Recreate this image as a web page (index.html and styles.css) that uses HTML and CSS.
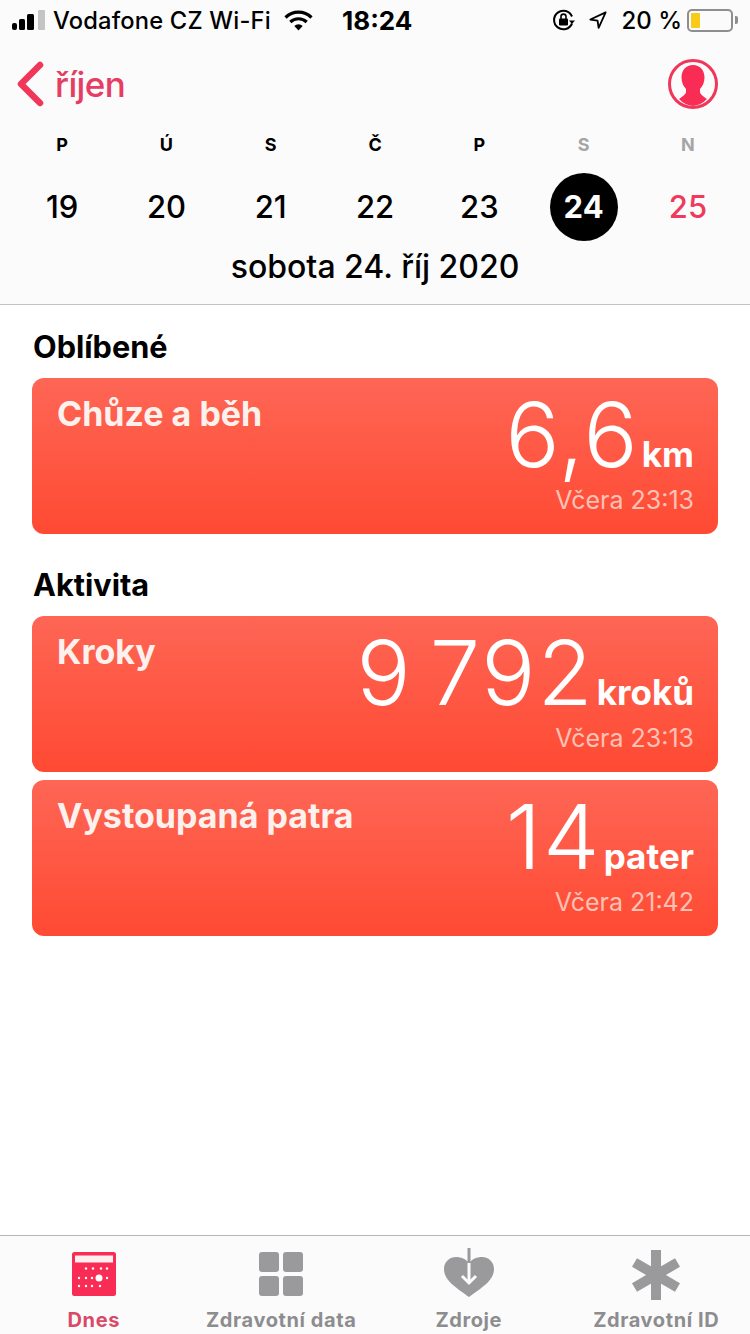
FILE: index.html
```html
<!DOCTYPE html>
<html lang="cs">
<head>
<meta charset="utf-8">
<title>Zdraví</title>
<link rel="stylesheet" href="styles.css">
</head>
<body>
<div class="app">
  <header class="top">
    <div class="status">
      <div class="status-left">
        <svg class="signal" width="33" height="20" viewBox="0 0 33 20"><rect x="0" y="13" width="5" height="7" rx="2" fill="#000"/><rect x="7" y="9" width="6" height="11" rx="1.5" fill="#000"/><rect x="15" y="4" width="7" height="16" rx="1.5" fill="#000"/><rect x="26" y="0" width="7" height="20" rx="1" fill="#c4c4c6"/></svg>
        <span class="carrier">Vodafone CZ Wi-Fi</span>
        <svg class="wifi" width="29" height="21" viewBox="0 0 29 21"><path d="M1.5 7.5a18.5 18.5 0 0 1 26 0" fill="none" stroke="#000" stroke-width="3.2"/><path d="M6.3 12a12 12 0 0 1 16.4 0" fill="none" stroke="#000" stroke-width="3.2"/><path d="M14.5 20.5l-4.2-4.6a6 6 0 0 1 8.4 0z" fill="#000"/></svg>
      </div>
      <span class="clock">18:24</span>
      <div class="status-right">
        <svg class="lock" width="24" height="22" viewBox="0 0 24 22"><path d="M20 14.5A9.3 9.3 0 1 1 20 7.5" fill="none" stroke="#000" stroke-width="2"/><path d="M17 11.5h6l-3 3.6z" fill="#000"/><rect x="7" y="9.5" width="9" height="7" rx="1" fill="#000"/><path d="M9 10V7.6a2.5 2.5 0 0 1 5 0V10" fill="none" stroke="#000" stroke-width="1.6"/></svg>
        <svg class="arrow" width="18" height="20" viewBox="0 0 20 20"><path d="M18.5 1.5L1.5 9.5l8 1.2 1.2 8z" fill="none" stroke="#000" stroke-width="2" stroke-linejoin="round"/></svg>
        <span class="percent">20 %</span>
        <div class="battery"><div class="battery-body"><div class="battery-fill"></div></div><div class="battery-tip"></div></div>
      </div>
    </div>
    <div class="nav">
      <div class="back">
        <svg width="29" height="46" viewBox="0 0 29 46"><path d="M25 4L6 23l19 19" fill="none" stroke="#f0375a" stroke-width="6.5" stroke-linecap="round" stroke-linejoin="round"/></svg>
        <span class="back-label">říjen</span>
      </div>
      <svg class="profile" width="50" height="50" viewBox="0 0 50 50"><circle cx="25" cy="25" r="23.5" fill="#fbfbfc" stroke="#f0375a" stroke-width="3"/><path d="M25 6c7 0 11.500 5 11.500 12.500 0 5-2 9-4.500 11.500v3c0 2 3 4 7 7A22 22 0 0 1 25 47a22 22 0 0 1-14-7c4-3 7-5 7-7v-3c-2.500-2.500-4.500-6.500-4.500-11.500C13.500 11 18 6 25 6z" fill="#f82c55"/></svg>
    </div>
    <div class="week">
      <div class="day"><span class="dow">P</span><span class="num">19</span></div>
      <div class="day"><span class="dow">Ú</span><span class="num">20</span></div>
      <div class="day"><span class="dow">S</span><span class="num">21</span></div>
      <div class="day"><span class="dow">Č</span><span class="num">22</span></div>
      <div class="day"><span class="dow">P</span><span class="num">23</span></div>
      <div class="day"><span class="dow muted">S</span><span class="num today">24</span></div>
      <div class="day"><span class="dow muted">N</span><span class="num sunday">25</span></div>
    </div>
    <div class="date">sobota 24. říj 2020</div>
  </header>

  <main class="content">
    <h2 class="section">Oblíbené</h2>
    <article class="card">
      <div class="card-title">Chůze a běh</div>
      <div class="card-data">
        <div class="value"><span class="big">6,6</span><span class="unit">km</span></div>
        <div class="when">Včera 23:13</div>
      </div>
    </article>
    <h2 class="section second">Aktivita</h2>
    <article class="card">
      <div class="card-title">Kroky</div>
      <div class="card-data">
        <div class="value"><span class="big">9 792</span><span class="unit">kroků</span></div>
        <div class="when">Včera 23:13</div>
      </div>
    </article>
    <article class="card next">
      <div class="card-title">Vystoupaná patra</div>
      <div class="card-data">
        <div class="value"><span class="big">14</span><span class="unit">pater</span></div>
        <div class="when">Včera 21:42</div>
      </div>
    </article>
  </main>

  <nav class="tabs">
    <div class="tab active">
      <svg width="46" height="46" viewBox="0 0 46 46"><rect x="1" y="1" width="44" height="44" rx="2.500" fill="#f82c55"/><rect x="4" y="4.500" width="38" height="7" fill="#fdeef1"/><g fill="#fff"><circle cx="15" cy="17.500" r="1.200"/><circle cx="22" cy="17.500" r="1.200"/><circle cx="30" cy="17.500" r="1.200"/><circle cx="36" cy="17.500" r="1.200"/><circle cx="8" cy="27" r="1.200"/><circle cx="15" cy="27" r="1.200"/><circle cx="21" cy="27" r="1.200"/><circle cx="28" cy="27" r="3.500"/><circle cx="36" cy="27" r="1.200"/><circle cx="8" cy="35" r="1.200"/><circle cx="15" cy="35" r="1.200"/><circle cx="21" cy="35" r="1.200"/><circle cx="29" cy="35" r="1.200"/></g></svg>
      <span>Dnes</span>
    </div>
    <div class="tab">
      <svg width="46" height="46" viewBox="0 0 46 46"><g fill="#9a9a9c"><rect x="1" y="1" width="20" height="20" rx="3"/><rect x="25" y="1" width="20" height="20" rx="3"/><rect x="1" y="25" width="20" height="20" rx="3"/><rect x="25" y="25" width="20" height="20" rx="3"/></g></svg>
      <span>Zdravotní data</span>
    </div>
    <div class="tab">
      <svg width="52" height="52" viewBox="0 0 52 52" class="tab-heart"><path d="M26 50C14 41 1 34 1 22 1 14.500 7 10 13 10c5 0 10 2 13 6 3-4 8-6 13-6 6 0 12 4.500 12 12 0 12-13 19-25 28z" fill="#9a9a9c"/><path d="M26 1v31" stroke="#9a9a9c" stroke-width="3" fill="none"/><path d="M26 16v20" stroke="#fbfbfc" stroke-width="3" fill="none"/><path d="M19 29l7 7 7-7" stroke="#fbfbfc" stroke-width="3" fill="none"/></svg>
      <span>Zdroje</span>
    </div>
    <div class="tab">
      <svg width="48" height="50" viewBox="0 0 48 50" class="tab-star"><g stroke="#9a9a9c" stroke-width="10"><path d="M24 0v50"/><path d="M2.500 12.500l43 25"/><path d="M45.500 12.500l-43 25"/></g></svg>
      <span>Zdravotní ID</span>
    </div>
  </nav>
</div>
</body>
</html>
```
FILE: styles.css
```css
* { box-sizing: border-box; margin: 0; padding: 0; }
html, body { width: 750px; height: 1334px; overflow: hidden; background: #fff; }
body { font-family: Inter, "Liberation Sans", sans-serif; color: #000; }
.app { width: 750px; height: 1334px; display: flex; flex-direction: column; }

.top { height: 305px; background: #fbfbfc; border-bottom: 1px solid #c2c2c4; flex: none; }
.status { height: 40px; display: flex; align-items: center; justify-content: space-between; padding: 0 12px; position: relative; }
.status-left { display: flex; align-items: center; }
.signal { margin-right: 8px; }
.carrier { font-size: 23.7px; font-weight: 500; letter-spacing: 0.2px; white-space: nowrap; }
.wifi { margin-left: 13px; }
.clock { font-size: 26px; font-weight: 700; position: absolute; left: 342px; top: 5px; }
.status-right { display: flex; align-items: center; }
.lock { margin-right: 13px; }
.arrow { margin-right: 14px; }
.percent { font-size: 24px; font-weight: 500; margin-right: 5px; white-space: nowrap; }
.battery { display: flex; align-items: center; }
.battery-body { width: 46px; height: 23px; border: 2px solid #8e8e90; border-radius: 5px; padding: 2px; }
.battery-fill { width: 9px; height: 100%; background: #f7cb17; border-radius: 1px; }
.battery-tip { width: 3px; height: 8px; background: #8e8e90; margin-left: 2px; border-radius: 0 2px 2px 0; }

.nav { height: 86px; display: flex; align-items: center; justify-content: space-between; padding: 0 32px 0 15px; }
.back { display: flex; align-items: center; gap: 11px; padding-top: 2px; }
.back-label { font-size: 35px; font-weight: 500; color: #e63d63; letter-spacing: -0.6px; }
.profile { margin-top: 2px; }

.week { display: grid; grid-template-columns: repeat(7, 104.3px); padding-left: 10px; margin-top: 8px; }
.day { display: flex; flex-direction: column; align-items: center; }
.dow { font-size: 18px; font-weight: 700; line-height: 22px; height: 22px; }
.dow.muted { color: #a5a5a7; }
.num { font-size: 31px; font-weight: 500; width: 68px; height: 68px; line-height: 68px; text-align: center; margin-top: 17px; }
.today { background: #000; color: #fff; border-radius: 50%; font-weight: 700; }
.sunday { color: #ef3a5d; }
.date { font-size: 32px; font-weight: 500; text-align: center; line-height: 38px; margin-top: 7px; }

.content { flex: 1; padding: 0 32px; }
.section { font-size: 30.7px; font-weight: 700; line-height: 34px; padding-top: 25px; margin-bottom: 14px; padding-left: 1px; }
.section.second { padding-top: 34px; }
.card { height: 156px; border-radius: 12px; background: linear-gradient(180deg, #fe6655 0%, #ff4a33 100%); color: #fff; position: relative; padding: 17px 25px; }
.card.next { margin-top: 8px; }
.card-title { font-size: 34px; font-weight: 700; line-height: 38px; color: #fdf1ee; }
.card-data { position: absolute; right: 24px; bottom: 20px; text-align: right; }
.value { display: flex; align-items: baseline; justify-content: flex-end; gap: 2px; margin-bottom: 11px; }
.big { font-size: 90px; font-weight: 300; line-height: 80px; letter-spacing: 2px; word-spacing: -10px; white-space: nowrap; }
.unit { font-size: 35px; font-weight: 700; }
.when { font-size: 25px; color: #fdc2b5; line-height: 28px; }

.tabs { height: 99px; flex: none; background: #fbfbfc; border-top: 1px solid #b5b5b7; display: grid; grid-template-columns: 187.5px 187.5px 187.5px 187.5px; }
.tab { position: relative; display: flex; flex-direction: column; align-items: center; padding-top: 15px; color: #8d8d8f; font-size: 20px; font-weight: 700; letter-spacing: 0.6px; }
.tab span { position: absolute; top: 72px; white-space: nowrap; }
.tab.active { color: #d84a68; }
.tab-heart { margin-top: -4px; }
.tab-star { margin-top: -1px; }
```
